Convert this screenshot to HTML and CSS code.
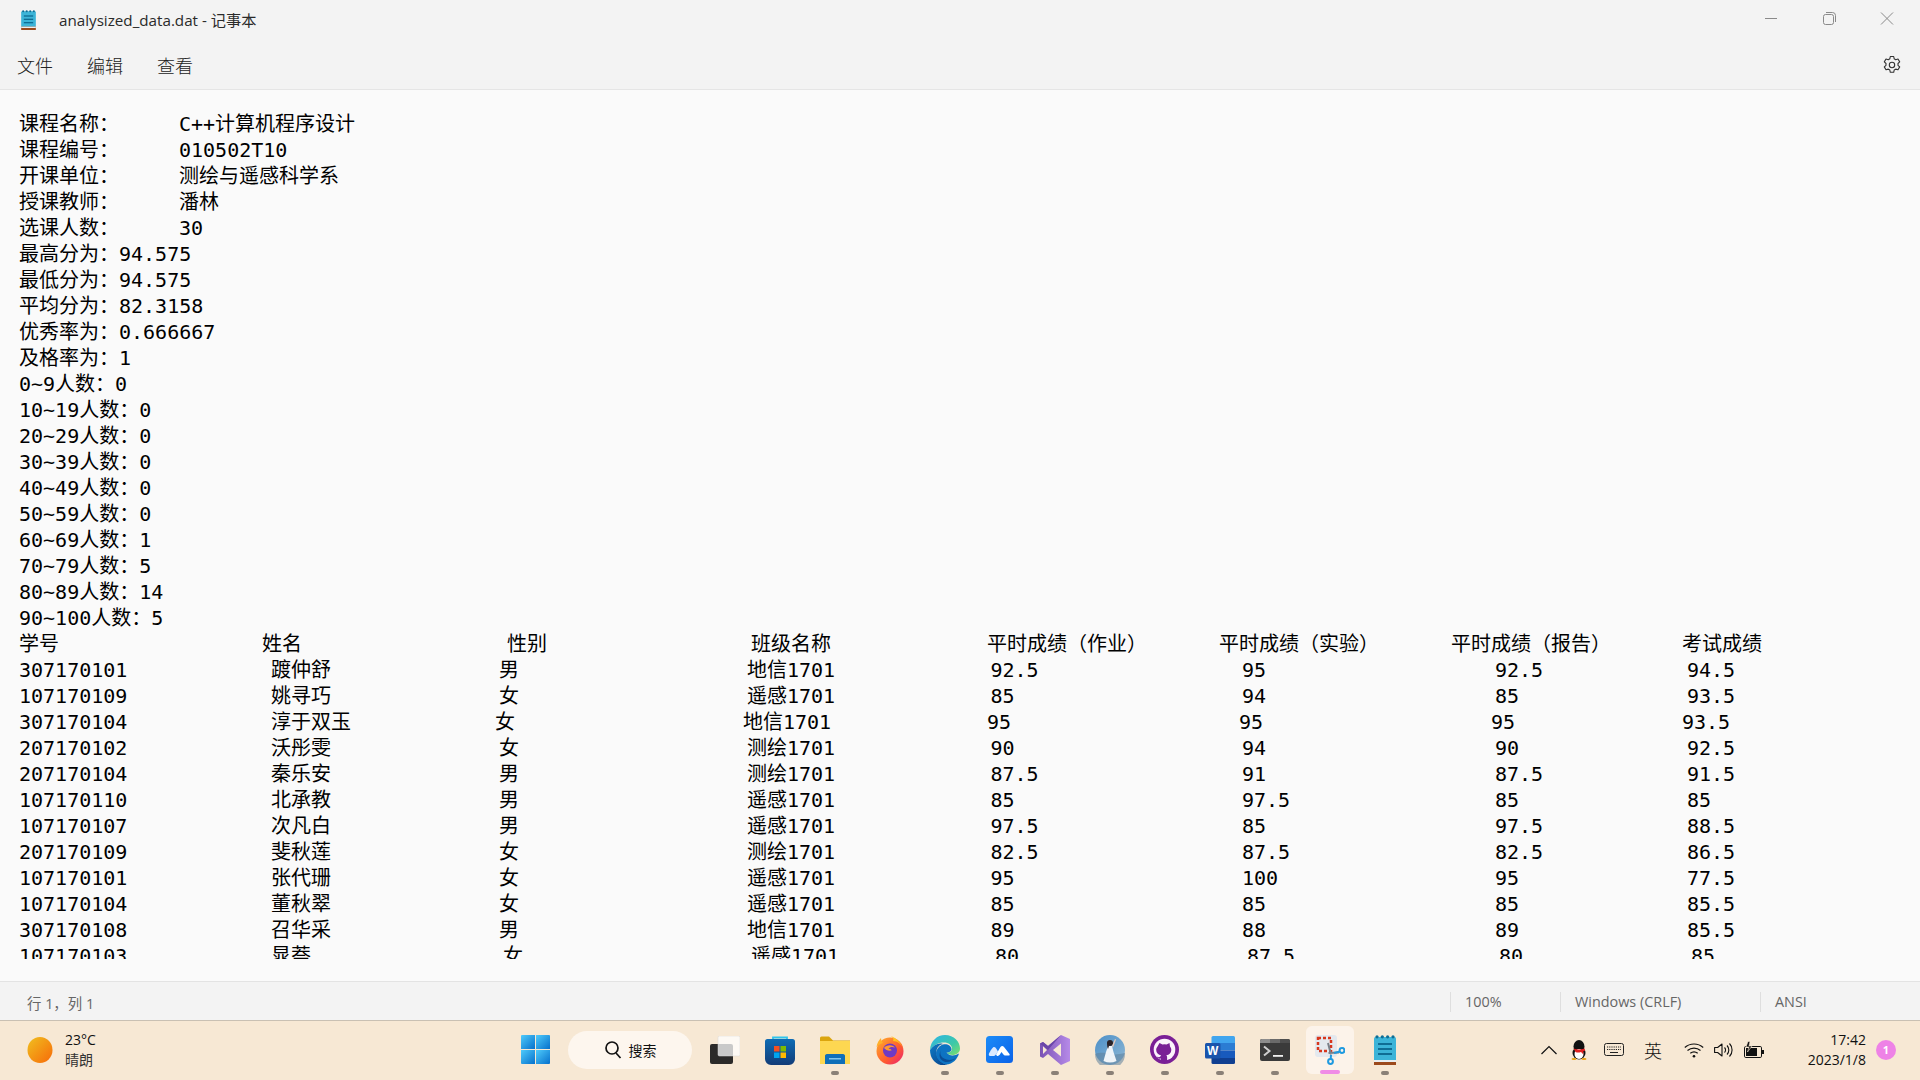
FILE: index.html
```html
<!DOCTYPE html>
<html lang="zh-CN">
<head>
<meta charset="utf-8">
<title>analysized_data.dat - 记事本</title>
<link rel="stylesheet" href="styles.css">
</head>
<body>
<svg class="defs" width="0" height="0">
  <defs>
    <symbol id="notepad" viewBox="0 0 22 30">
      <rect x="0" y="2" width="22" height="24" rx="1.5" fill="#3cb4d8"/>
      <rect x="0" y="25" width="22" height="5" fill="#9c4a1c"/>
      <rect x="0" y="25" width="22" height="2" fill="#e9eef0"/>
      <g fill="#0f6d94"><circle cx="3" cy="1.8" r="1.6"/><circle cx="8.3" cy="1.8" r="1.6"/><circle cx="13.6" cy="1.8" r="1.6"/><circle cx="19" cy="1.8" r="1.6"/></g>
      <g fill="#0f6d94"><rect x="4" y="8" width="14" height="2"/><rect x="4" y="13" width="14" height="2"/><rect x="4" y="18" width="14" height="2"/></g>
    </symbol>
    <linearGradient id="sun" x1="0" y1="0" x2="1" y2="1"><stop offset="0" stop-color="#f0c020"/><stop offset="1" stop-color="#f76a08"/></linearGradient>
    <linearGradient id="win" x1="0" y1="0" x2="1" y2="1"><stop offset="0" stop-color="#4fcbfb"/><stop offset="1" stop-color="#0670cc"/></linearGradient>
    <linearGradient id="store" x1="0" y1="0" x2="0" y2="1"><stop offset="0" stop-color="#0f6cb4"/><stop offset="1" stop-color="#123c78"/></linearGradient>
    <linearGradient id="edge" x1="0" y1="0" x2="1" y2="1"><stop offset="0" stop-color="#2fb4e8"/><stop offset="0.6" stop-color="#3cc8a8"/><stop offset="1" stop-color="#7ee06a"/></linearGradient>
    <linearGradient id="edge2" x1="0" y1="0" x2="1" y2="1"><stop offset="0" stop-color="#0c7cc8"/><stop offset="1" stop-color="#0a3f86"/></linearGradient>
    <linearGradient id="ff" x1="0" y1="0" x2="1" y2="1"><stop offset="0" stop-color="#ffb02a"/><stop offset="0.6" stop-color="#ff5a30"/><stop offset="1" stop-color="#e81e78"/></linearGradient>
    <linearGradient id="lark" x1="0" y1="0" x2="1" y2="1"><stop offset="0" stop-color="#1c8cf8"/><stop offset="1" stop-color="#0a62e8"/></linearGradient>
    <linearGradient id="vs" x1="0" y1="0" x2="1" y2="0"><stop offset="0" stop-color="#7a52b4"/><stop offset="1" stop-color="#b68ae8"/></linearGradient>
    <linearGradient id="sky" x1="0" y1="0" x2="1" y2="1"><stop offset="0" stop-color="#4c8fc8"/><stop offset="1" stop-color="#8fb8d4"/></linearGradient>
  </defs>
</svg>

<header class="titlebar">
  <svg class="app-icon" width="15" height="20"><use href="#notepad"/></svg>
  <span class="app-title">analysized_data.dat - 记事本</span>
  <div class="win-controls">
    <svg class="ctl" width="58" height="34" viewBox="0 0 58 34"><path d="M23 17.5h12" stroke="#8a8a8a" fill="none"/></svg>
    <svg class="ctl" width="58" height="34" viewBox="0 0 58 34"><path d="M23.5 15.5a2 2 0 0 1 2-2h6a2 2 0 0 1 2 2v6a2 2 0 0 1-2 2h-6a2 2 0 0 1-2-2z M26 11.5h6.500a3 3 0 0 1 3 3v6.500" stroke="#8a8a8a" fill="none"/></svg>
    <svg class="ctl" width="58" height="34" viewBox="0 0 58 34"><path d="M23 11.500l12 12M35 11.500l-12 12" stroke="#8a8a8a" fill="none"/></svg>
  </div>
</header>

<nav class="menubar">
  <span class="menu-item">文件</span>
  <span class="menu-item">编辑</span>
  <span class="menu-item">查看</span>
  <svg class="gear" width="20" height="20" viewBox="0 0 20 20" fill="none" stroke="#333" stroke-width="1.100"><circle cx="10" cy="10" r="2.700"/><path d="M8.300 1.500h3.400l.5 2.300 1.500.9 2.300-.7 1.700 2.900-1.700 1.600v1.800l1.700 1.600-1.700 2.900-2.300-.7-1.500.9-.5 2.300H8.300l-.5-2.300-1.500-.9-2.300.7-1.700-2.900 1.700-1.600V8.500L2.300 6.900 4 4l2.300.7 1.500-.9z" stroke-linejoin="round"/></svg>
</nav>

<main class="editor">
  <div class="doc">
    <div class="kv"><span class="k">课程名称：</span><span>C++计算机程序设计</span></div>
    <div class="kv"><span class="k">课程编号：</span><span>010502T10</span></div>
    <div class="kv"><span class="k">开课单位：</span><span>测绘与遥感科学系</span></div>
    <div class="kv"><span class="k">授课教师：</span><span>潘林</span></div>
    <div class="kv"><span class="k">选课人数：</span><span>30</span></div>
    <div>最高分为：94.575</div>
    <div>最低分为：94.575</div>
    <div>平均分为：82.3158</div>
    <div>优秀率为：0.666667</div>
    <div>及格率为：1</div>
    <div>0~9人数：0</div>
    <div>10~19人数：0</div>
    <div>20~29人数：0</div>
    <div>30~39人数：0</div>
    <div>40~49人数：0</div>
    <div>50~59人数：0</div>
    <div>60~69人数：1</div>
    <div>70~79人数：5</div>
    <div>80~89人数：14</div>
    <div>90~100人数：5</div>
    <div class="row head"><span>学号</span><span>姓名</span><span>性别</span><span>班级名称</span><span>平时成绩（作业）</span><span>平时成绩（实验）</span><span>平时成绩（报告）</span><span>考试成绩</span></div>
    <div class="row"><span>307170101</span><span>踱仲舒</span><span>男</span><span>地信1701</span><span>92.5</span><span>95</span><span>92.5</span><span>94.5</span></div>
    <div class="row"><span>107170109</span><span>姚寻巧</span><span>女</span><span>遥感1701</span><span>85</span><span>94</span><span>85</span><span>93.5</span></div>
    <div class="row wide"><span>307170104</span><span>淳于双玉</span><span>女</span><span>地信1701</span><span>95</span><span>95</span><span>95</span><span>93.5</span></div>
    <div class="row"><span>207170102</span><span>沃彤雯</span><span>女</span><span>测绘1701</span><span>90</span><span>94</span><span>90</span><span>92.5</span></div>
    <div class="row"><span>207170104</span><span>秦乐安</span><span>男</span><span>测绘1701</span><span>87.5</span><span>91</span><span>87.5</span><span>91.5</span></div>
    <div class="row"><span>107170110</span><span>北承教</span><span>男</span><span>遥感1701</span><span>85</span><span>97.5</span><span>85</span><span>85</span></div>
    <div class="row"><span>107170107</span><span>次凡白</span><span>男</span><span>遥感1701</span><span>97.5</span><span>85</span><span>97.5</span><span>88.5</span></div>
    <div class="row"><span>207170109</span><span>斐秋莲</span><span>女</span><span>测绘1701</span><span>82.5</span><span>87.5</span><span>82.5</span><span>86.5</span></div>
    <div class="row"><span>107170101</span><span>张代珊</span><span>女</span><span>遥感1701</span><span>95</span><span>100</span><span>95</span><span>77.5</span></div>
    <div class="row"><span>107170104</span><span>董秋翠</span><span>女</span><span>遥感1701</span><span>85</span><span>85</span><span>85</span><span>85.5</span></div>
    <div class="row"><span>307170108</span><span>召华采</span><span>男</span><span>地信1701</span><span>89</span><span>88</span><span>89</span><span>85.5</span></div>
    <div class="row short"><span>107170103</span><span>晁萘</span><span>女</span><span>遥感1701</span><span>80</span><span>87.5</span><span>80</span><span>85</span></div>
  </div>
</main>

<footer class="statusbar">
  <span class="pos">行 1，列 1</span>
  <span class="st st-zoom">100%</span>
  <span class="st st-eol">Windows (CRLF)</span>
  <span class="st st-enc">ANSI</span>
</footer>

<div class="taskbar">
  <div class="weather">
    <svg width="26" height="28" viewBox="0 0 26 28"><ellipse cx="13" cy="14" rx="12.500" ry="13" fill="url(#sun)"/></svg>
    <div class="weather-text"><span class="temp">23°C</span><span class="cond">晴朗</span></div>
  </div>
  <div class="tasks">
    <div class="tile tile-win">
      <svg width="29" height="29" viewBox="0 0 29 29"><g fill="url(#win)"><path d="M1 0h13v14H0V1a1 1 0 0 1 1-1z"/><path d="M15 0h13a1 1 0 0 1 1 1v13H15z"/><path d="M0 15h14v14H1a1 1 0 0 1-1-1z"/><path d="M15 15h14v13a1 1 0 0 1-1 1H15z"/></g></svg>
    </div>
    <div class="search">
      <svg width="18" height="20" viewBox="0 0 18 20" fill="none" stroke="#111" stroke-width="1.700"><circle cx="8" cy="8" r="6"/><path d="M12 13l4.500 5"/></svg>
      <span>搜索</span>
    </div>
    <div class="tile">
      <svg width="30" height="28" viewBox="0 0 30 28"><rect x="0" y="8" width="23" height="20" rx="2" fill="#2b2a29"/><rect x="8" y="0" width="22" height="20" rx="1.500" fill="#fff" fill-opacity=".75" stroke="#d8d8d8" stroke-width=".5"/></svg>
    </div>
    <div class="tile">
      <svg width="30" height="30" viewBox="0 0 30 30"><path d="M8 6V2.500h14V6" fill="none" stroke="#30c4ec" stroke-width="1.800"/><path d="M2.500 4h25A2.500 2.500 0 0 1 30 6.500V24a6 6 0 0 1-6 6H6a6 6 0 0 1-6-6V6.500A2.500 2.500 0 0 1 2.500 4z" fill="url(#store)"/><rect x="9" y="11" width="5.500" height="5.500" fill="#f25022"/><rect x="15.500" y="11" width="5.500" height="5.500" fill="#7fba00"/><rect x="9" y="17.500" width="5.500" height="5.500" fill="#00a4ef"/><rect x="15.500" y="17.500" width="5.500" height="5.500" fill="#ffb900"/></svg>
    </div>
    <div class="tile dot">
      <svg width="30" height="28" viewBox="0 0 30 28"><path d="M0 2a1.500 1.500 0 0 1 1.500-1.500H9l4 4h17V10H0z" fill="#dba50e"/><path d="M0 5h30v23H0z" fill="#fdd751"/><path d="M5 19.500a2 2 0 0 1 2 -1.500h16a2 2 0 0 1 2 1.500V28H5z" fill="#0f6fb8"/><rect x="9" y="22" width="12" height="1.500" fill="#7fc4ec"/></svg>
    </div>
    <div class="tile">
      <svg width="30" height="30" viewBox="0 0 30 30"><circle cx="15" cy="16" r="13.500" fill="url(#ff)"/><path d="M16 1c5 2 11 7 12.500 14C27 9 22 6 18 6c1-2 0-3-2-5z" fill="#ffc21f"/><path d="M1.500 12C2 8 4 5 6 3c0 2 1 4 2 5-3 1-5 2-6.500 4z" fill="#ffb02a"/><circle cx="15" cy="15.500" r="7" fill="#6e3ac4"/><path d="M9 13c2-3 8-4 11-.5-3-1-5-.5-6.500 1 2 .5 3 1 3 2-3 .5-6-.5-7.500-2.500z" fill="#ff9830"/></svg>
    </div>
    <div class="tile dot">
      <svg width="30" height="30" viewBox="0 0 30 30"><path d="M15 0c9 0 15 6.500 15 13.500 0 4-3.500 6.500-7.500 6.500-3 0-5-1-6-2.500 3 .5 5.500-1 5.500-3.500C22 10 18.500 7.500 14 7.500 8.500 7.500 3.500 10 0 15 .5 6 7 0 15 0z" fill="url(#edge)"/><path d="M0 15c3.500-5 8.500-7.500 13-6-5 1-7 5-6.500 9.500.5 5 5 9.500 11 11.500-2 .5-3 .5-4 .5C6 30 0 24 0 15z" fill="url(#edge2)"/><path d="M13 9.500c4-1 8 1 8.500 4.500.2 2-2 3.500-5 3.500 3 4 8 3.500 12.500 1-1.500 5-6 11-13 11-6-2-10-6-10-11.500C6.500 14 9.500 10.500 13 9.500z" fill="#0d73c2"/><path d="M11 15c-1.500 3-.5 6.500 3 8.500 3.500 2 8 2 12-.5-3 3-8 5-12 3.500-4-1.500-6-6-3-11.500z" fill="#0a4e96"/></svg>
    </div>
    <div class="tile dot">
      <svg width="27" height="27" viewBox="0 0 27 27"><rect width="27" height="27" rx="3.500" fill="url(#lark)"/><path d="M3 17.500c1-2 2.500-4.500 4-6 1.500-1 2.500 0 3.500 1.500l1.500 2.500-2.500 3.500c-1 1-1.500 1-2.500 1L4 20c-1 0-1.500-1.500-1-2.500z" fill="#dbe9ff"/><path d="M10 18.500l4.500-7.500c1-1.500 2.500-1.500 3.500 0l5.500 7c.5 1 0 1.500-1 1.500h-3c-1 0-1.500-.5-2.500-1.500l-1.500-2-2 3c-.5.5-1.500 1-2.500 1z" fill="#fff"/></svg>
    </div>
    <div class="tile dot">
      <svg width="30" height="30" viewBox="0 0 30 30"><path d="M21 0l9 4v22l-9 4-13-11-5 4-3-1.500V8.500L3 7l5 4z" fill="url(#vs)"/><path d="M21 8.500L13 15l8 6.500z" fill="#f6e8d4"/><path d="M3 11l4 4-4 4z" fill="#f6e8d4"/><path d="M21 0L8 11l-5-4-3 1.500 8 6.500z" fill="#6a45a8"/></svg>
    </div>
    <div class="tile dot">
      <svg width="30" height="30" viewBox="0 0 30 30"><circle cx="15" cy="15" r="15" fill="url(#sky)"/><path d="M0 19c6-2 10-1 15 0s10 0 15-1v1a15 15 0 0 1-30 0z" fill="#5f7f9a" opacity=".55"/><circle cx="15" cy="8" r="3" fill="#2b2226"/><path d="M13 11h4l1.500 6 3 9a15 15 0 0 1-13 0l2.500-9z" fill="#f0f4f8"/><path d="M17 11l3-7 1 .5-3 8z" fill="#eac8b8"/><path d="M12.500 7c-.5 3-.5 5 .5 7l1-3z" fill="#2b2226"/></svg>
    </div>
    <div class="tile dot">
      <svg width="29" height="29" viewBox="0 0 29 29"><circle cx="14.500" cy="14.500" r="14.500" fill="#7a1f96"/><circle cx="14.500" cy="14.500" r="10.800" fill="#fbf2fb"/><path d="M9.500 8l3 1.500a8 8 0 0 1 4 0l3-1.500.5 3.500c1 1.200 1.300 2.300 1.300 3.500 0 3-2 4.800-5 5.200.6.500.8 1.200.8 2V26h-6.200v-2.500c-2.200.5-3.500-.3-4.200-2 1.500.7 2.500 1 3.700 0 .1-.6.300-1 .8-1.300-3-.4-5-2.200-5-5.200 0-1.200.3-2.300 1.300-3.500z" fill="#7a1f96"/></svg>
    </div>
    <div class="tile dot">
      <svg width="30" height="30" viewBox="0 0 30 30"><path d="M8 1h20.500A1.500 1.500 0 0 1 30 2.500V8H6.500V2.500A1.500 1.500 0 0 1 8 1z" fill="#41a5ee"/><rect x="6.500" y="8" width="23.500" height="7.500" fill="#2b7cd3"/><rect x="6.500" y="15.500" width="23.500" height="7.500" fill="#185abd"/><path d="M6.500 23H30v4.500a1.500 1.500 0 0 1-1.500 1.500H8a1.500 1.500 0 0 1-1.500-1.500z" fill="#103f91"/><rect x="0" y="8" width="15.500" height="15.500" rx="1.500" fill="#1a54ab"/><text class="word-w" x="7.700" y="20.200" text-anchor="middle">W</text></svg>
    </div>
    <div class="tile dot">
      <svg width="30" height="22" viewBox="0 0 30 22"><rect width="30" height="22" rx="2" fill="#3a3a3a"/><path d="M0 2a2 2 0 0 1 2-2h8v4H0z" fill="#8c8c8c"/><path d="M10 0h10v4H10z" fill="#6a6a6a"/><path d="M20 0h8a2 2 0 0 1 2 2v2H20z" fill="#4e4e4e"/><path d="M4 7.500l5.500 4.500L4 16.500" fill="none" stroke="#cfcfcf" stroke-width="2"/><rect x="13" y="16" width="10" height="1.800" fill="#f0f0f0"/></svg>
    </div>
    <div class="tile active">
      <svg width="30" height="30" viewBox="0 0 30 30"><rect x="0" y="0" width="22" height="22" rx="3" fill="#e4e8ee"/><path d="M3 3h13v13H3z" fill="none" stroke="#d8361c" stroke-width="2.500" stroke-dasharray="3 2"/><path d="M13 8l3 11.500M24 17.500L13.500 18" fill="none" stroke="#7a7f88" stroke-width="2"/><circle cx="27" cy="15.500" r="2.400" fill="none" stroke="#1f9ae0" stroke-width="2"/><circle cx="15.500" cy="26.500" r="2.400" fill="none" stroke="#1f9ae0" stroke-width="2"/><path d="M16 20l-.3 4M19 18l6-1.500" stroke="#1f9ae0" stroke-width="2"/></svg>
    </div>
    <div class="tile dot">
      <svg width="22" height="30"><use href="#notepad"/></svg>
    </div>
  </div>
  <div class="tray">
    <svg class="t-chev" width="16" height="10" viewBox="0 0 16 10" fill="none" stroke="#111" stroke-width="1.200"><path d="M.5 9L8 1.500 15.500 9"/></svg>
    <svg class="t-qq" width="16" height="20" viewBox="0 0 16 20"><ellipse cx="8" cy="6.500" rx="5.500" ry="6.500" fill="#111"/><ellipse cx="8" cy="13" rx="6.500" ry="6.500" fill="#111"/><ellipse cx="8" cy="14" rx="4.500" ry="5" fill="#fff"/><path d="M2.500 8.500q5.500 2 11 0l.5 2q-1 1-2 1l.5 3-2.500-2.500q-3 1-5.500 0z" fill="#e02020"/><ellipse cx="3" cy="19" rx="2.500" ry="1" fill="#e8a010"/><ellipse cx="13" cy="19" rx="2.500" ry="1" fill="#e8a010"/></svg>
    <svg class="t-kb" width="20" height="13" viewBox="0 0 20 13" fill="none" stroke="#222"><rect x=".5" y=".5" width="19" height="12" rx="2"/><path d="M3 4h14M3 6.500h14" stroke-dasharray="1.200 1"/><path d="M6 9.500h8"/></svg>
    <span class="t-ime">英</span>
    <svg class="t-wifi" width="20" height="16" viewBox="0 0 20 16" fill="none" stroke="#111" stroke-width="1.200"><path d="M.8 5.500C6 .8 14 .8 19.200 5.500M3.500 8.500c3.800-3.200 9.200-3.200 13 0M6.300 11.300c2.200-1.800 5.200-1.800 7.400 0"/><circle cx="10" cy="14.300" r="1.300" fill="#111" stroke="none"/></svg>
    <svg class="t-vol" width="20" height="16" viewBox="0 0 20 16" fill="none" stroke="#111" stroke-width="1.100"><path d="M.6 5.500h3L8 2v12L3.600 10.500h-3z" stroke-linejoin="round"/><path d="M10.500 5.500a3.500 3.500 0 0 1 0 5M13 3.500a6.500 6.500 0 0 1 0 9M15.500 1.500a9.500 9.500 0 0 1 0 13"/></svg>
    <svg class="t-bat" width="20" height="18" viewBox="0 0 20 18"><path d="M2.500 5.500H1.800A1.300 1.300 0 0 0 .5 6.800v8.400a1.300 1.300 0 0 0 1.300 1.300h14.400a1.300 1.300 0 0 0 1.300-1.300V6.800a1.300 1.300 0 0 0-1.300-1.300H7" fill="none" stroke="#111"/><rect x="2" y="7" width="11" height="8" fill="#111"/><rect x="18" y="9" width="2" height="4" fill="#111"/><path d="M4 .5L2 6h3l-1.500 5L8 5H5l1-4.500z" fill="#111" stroke="#f6e8d4" stroke-width=".6"/></svg>
    <div class="clock"><span>17:42</span><span>2023/1/8</span></div>
    <span class="badge">1</span>
  </div>
</div>
</body>
</html>
```
FILE: styles.css
```css
* { box-sizing: border-box; }
html, body { margin: 0; height: 100%; }
body {
  width: 1920px;
  height: 1080px;
  overflow: hidden;
  display: flex;
  flex-direction: column;
  font-family: "Open Sans", "Noto Sans CJK SC", sans-serif;
  background: #f3f3f3;
  color: #1a1a1a;
}
.defs { position: absolute; }

.titlebar {
  height: 39px;
  flex: none;
  display: flex;
  align-items: center;
  padding-left: 21px;
}
.app-title {
  margin-left: 23px;
  font-size: 15.200px;
  line-height: 20px;
  color: #2a2a2a;
}
.win-controls {
  margin-left: auto;
  margin-right: 4px;
  display: flex;
  align-self: flex-start;
  padding-top: 1px;
}
.ctl { display: block; }

.menubar {
  height: 51px;
  flex: none;
  display: flex;
  align-items: center;
  padding-top: 2px;
  padding-left: 17px;
  gap: 34px;
  border-bottom: 1px solid #e5e5e5;
}
.menu-item {
  font-size: 18px;
  line-height: 24px;
  color: #222;
  font-family: "Noto Sans CJK SC", sans-serif;
  font-weight: 300;
}
.gear { margin-left: auto; margin-right: 18px; }

.editor {
  flex: 1;
  min-height: 0;
  background: #fafafa;
  padding: 21px 0 0 19px;
  border-bottom: 1px solid #e3e3e3;
}
.doc {
  height: 848px;
  overflow: hidden;
  font-family: "DejaVu Sans Mono", "Noto Sans CJK SC", monospace;
  font-size: 20px;
  line-height: 26px;
  color: #000;
}
.doc > div { height: 26px; }
.kv { display: flex; }
.k { width: 160px; flex: none; }
.row {
  display: grid;
  grid-template-columns: 252px 228px 248px 243.500px 251.500px 253px 192px 120px;
}
.row.head { grid-template-columns: 243px 245px 244px 236px 232px 232px 231px 120px; }
.row.wide { grid-template-columns: 252px 224px 248px 244px 252px 252px 191px 120px; }
.row.short { grid-template-columns: 252px 232px 248px 244px 252px 252px 192px 120px; }

.statusbar {
  height: 38px;
  flex: none;
  display: flex;
  align-items: center;
  padding-top: 2px;
  font-size: 14.400px;
  color: #666;
}
.pos { width: 1450px; padding-left: 27px; }
.st { height: 20px; line-height: 20px; border-left: 1px solid #dedede; padding-left: 14px; }
.st-zoom { width: 110px; }
.st-eol { width: 200px; }
.st-enc { width: 100px; }

.taskbar {
  height: 60px;
  flex: none;
  display: flex;
  align-items: center;
  padding-bottom: 2px;
  background: #f7e8d4;
  border-top: 1px solid #c9c0b3;
  color: #111;
}
.weather {
  width: 508px;
  flex: none;
  display: flex;
  align-items: center;
  padding-left: 27px;
  gap: 12px;
}
.weather-text { display: flex; flex-direction: column; font-size: 14px; line-height: 20px; }
.cond { color: #333; }
.tasks { display: flex; align-items: center; height: 100%; }
.tile {
  position: relative;
  width: 55px;
  height: 48px;
  flex: none;
  display: flex;
  align-items: center;
  justify-content: center;
  border-radius: 6px;
}
.dot::after, .active::after {
  content: "";
  position: absolute;
  left: 50%;
  bottom: -1px;
  width: 8px;
  height: 4px;
  margin-left: -4px;
  border-radius: 2px;
  background: #8a8077;
}
.active {
  width: 48px;
  margin: 0 3.500px;
  background: #fcf3ea;
}
.active::after {
  width: 20px;
  margin-left: -10px;
  bottom: 0;
  height: 4px;
  background: #f08ce6;
}
.search {
  width: 124px;
  height: 38px;
  flex: none;
  margin: 0 5px 0 5px;
  border-radius: 19px;
  background: #fdf6ee;
  display: flex;
  align-items: center;
  justify-content: center;
  gap: 7px;
  font-size: 14px;
  color: #111;
}
.word-w { font-family: "Liberation Sans", sans-serif; font-weight: 700; font-size: 12px; fill: #fff; }

.tray { margin-left: auto; display: flex; align-items: center; padding-right: 24px; }
.t-chev { margin-right: 14px; }
.t-qq { margin-right: 17px; }
.t-kb { margin-right: 20px; }
.t-ime { font-size: 18px; width: 20px; margin-right: 20px; font-family: "Noto Sans CJK SC", sans-serif; font-weight: 300; }
.t-wifi { margin-right: 10px; }
.t-vol { margin-right: 10px; }
.t-bat { margin-right: 20px; }
.clock { width: 82px; display: flex; flex-direction: column; align-items: flex-end; font-size: 14px; line-height: 20px; color: #111; }
.badge {
  width: 20px;
  height: 20px;
  margin-left: 10px;
  border-radius: 50%;
  background: #ee82e6;
  color: #fff;
  font-size: 11px;
  font-weight: 700;
  line-height: 20px;
  text-align: center;
}
```
